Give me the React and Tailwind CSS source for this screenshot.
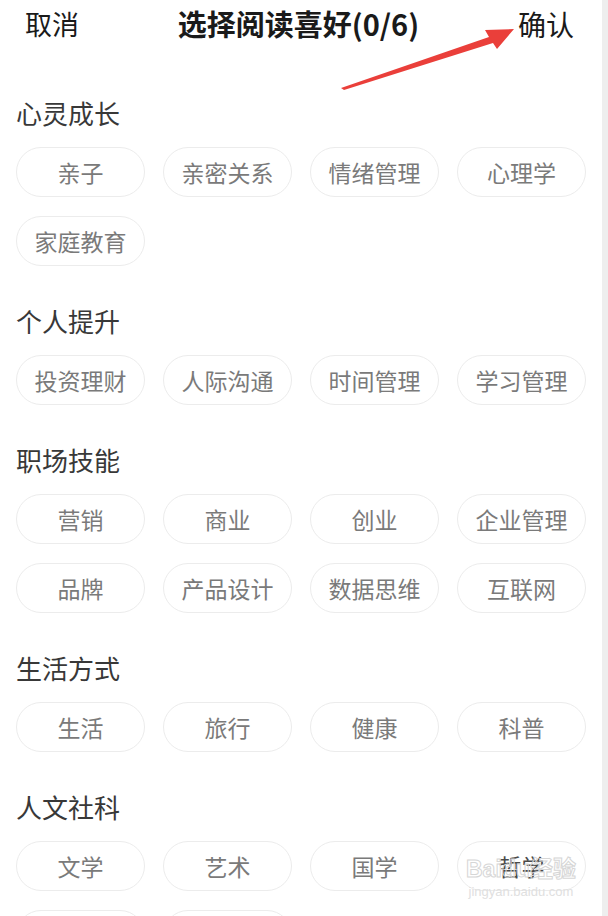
const sections = [
  { title: '心灵成长', tags: ['亲子', '亲密关系', '情绪管理', '心理学', '家庭教育'] },
  { title: '个人提升', tags: ['投资理财', '人际沟通', '时间管理', '学习管理'] },
  { title: '职场技能', tags: ['营销', '商业', '创业', '企业管理', '品牌', '产品设计', '数据思维', '互联网'] },
  { title: '生活方式', tags: ['生活', '旅行', '健康', '科普'] },
  { title: '人文社科', tags: ['文学', '艺术', '国学', '哲学', '历史', '社会学'] },
]

function Tag({ label }) {
  const dark = label === '哲学'
  return (
    <div
      className={
        'flex h-[50px] w-[129px] items-center justify-center rounded-full border-[1.5px] border-[#ececec] bg-white text-[23px] ' +
        (dark ? 'text-[#4a4a4a]' : 'text-[#7a7a7a]')
      }
    >
      {label}
    </div>
  )
}

function Arrow() {
  return (
    <svg className="pointer-events-none absolute left-0 top-0" width="608" height="100" viewBox="0 0 608 100">
      <polygon
        points="341,88 489,37 485,30 514,29 497,49 493,43 344,90"
        fill="#ea3f3a"
      />
    </svg>
  )
}

// faint site watermark laid over the bottom-right tag
function Watermark() {
  return (
    <div className="pointer-events-none absolute left-[466px] top-[858px] flex flex-col items-center whitespace-nowrap leading-none">
      <div
        className="text-[23px] font-bold text-transparent"
        style={{ WebkitTextStroke: '1px #d6d6d6', fontFamily: '"Liberation Sans", "Noto Sans CJK SC", sans-serif' }}
      >
        Baidu经验
      </div>
      <div
        className="mt-[4px] text-[13px] text-[#e0e0e0]"
        style={{ fontFamily: '"Liberation Sans", sans-serif' }}
      >
        jingyan.baidu.com
      </div>
    </div>
  )
}

export default function App() {
  return (
    <div
      className="relative flex h-[916px] w-[608px] overflow-hidden bg-white"
      style={{ fontFamily: '"Noto Sans CJK SC", "Noto Sans", sans-serif' }}
    >
      <div className="w-[602px] shrink-0">
        <header className="flex h-[48px] items-center pl-[25px] pr-[28px] text-[#1a1a1a]">
          <span className="text-[27px]">取消</span>
          <h1 className="flex-1 text-center text-[29px] font-bold">选择阅读喜好(0/6)</h1>
          <span className="text-[28px]">确认</span>
        </header>

        <main className="flex flex-col gap-[35px] px-[16px] pt-[45px]">
          {sections.map((section) => (
            <section key={section.title}>
              <h2 className="text-[26px] leading-[40px] text-[#383838]">{section.title}</h2>
              <div className="mt-[14px] grid grid-cols-[repeat(4,129px)] gap-x-[18px] gap-y-[19px]">
                {section.tags.map((tag) => (
                  <Tag key={tag} label={tag} />
                ))}
              </div>
            </section>
          ))}
        </main>
      </div>
      <div className="flex-1 bg-[#eeeeee]" />

      <Arrow />
      <Watermark />
    </div>
  )
}
